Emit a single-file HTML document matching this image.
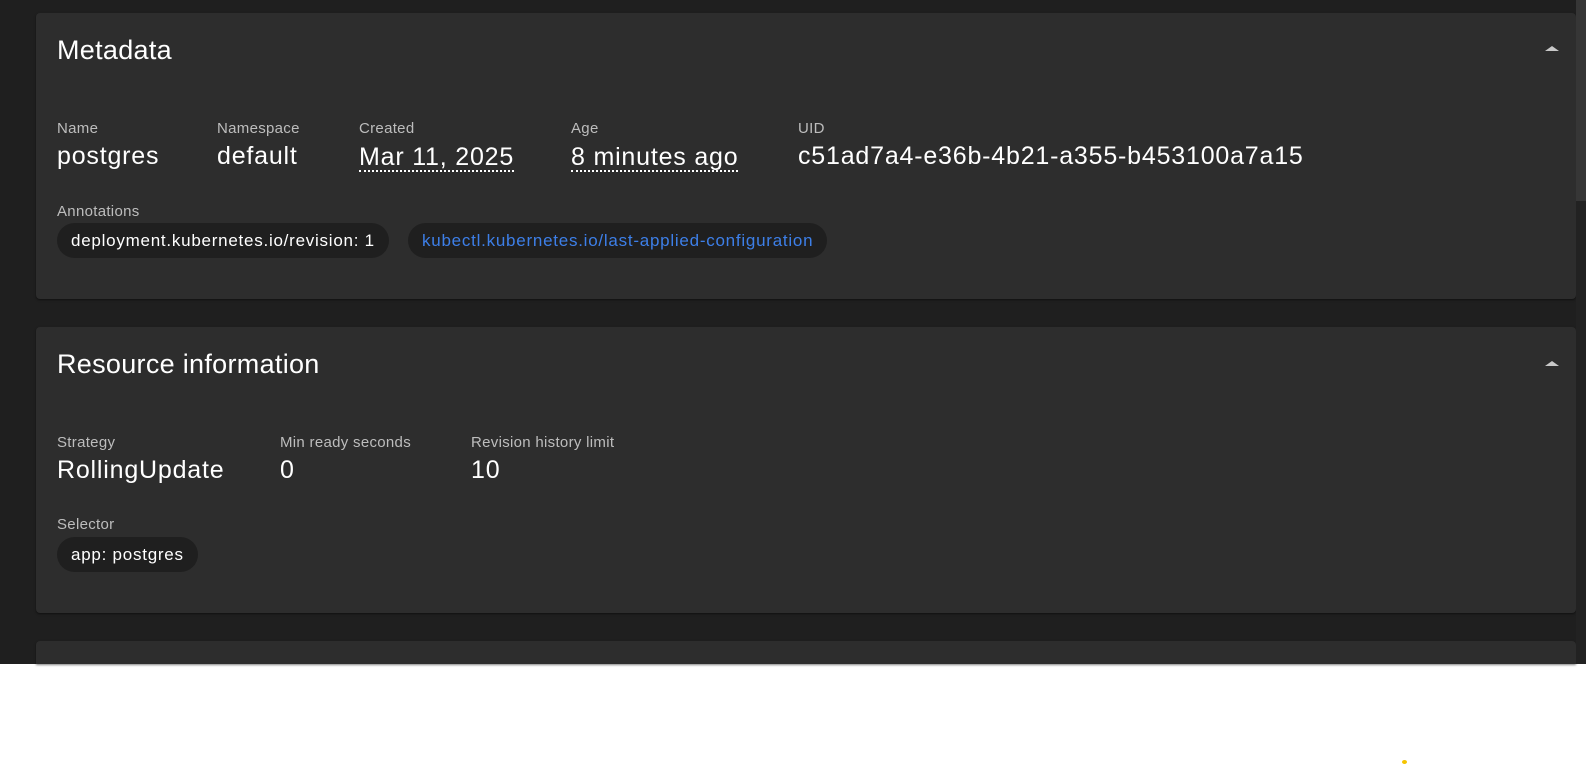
<!DOCTYPE html>
<html><head><meta charset="utf-8"><style>
*{margin:0;padding:0;box-sizing:border-box}
body{width:1586px;height:775px;background:#fff;position:relative;overflow:hidden;font-family:"Liberation Sans",Arial,sans-serif;color:#fff}
.bg{position:absolute;left:0;top:0;width:1586px;height:664px;background:#1f1f1f}
.card{position:absolute;left:36px;width:1540px;background:#2d2d2d;border-radius:4px;box-shadow:0 1px 2px rgba(0,0,0,.5)}
.t{position:absolute;font-size:27px;color:#fff;white-space:nowrap;letter-spacing:0.3px}
.l{position:absolute;font-size:15px;color:#bdbdbd;white-space:nowrap;letter-spacing:0.3px}
.v{position:absolute;font-size:25px;color:#fff;white-space:nowrap;letter-spacing:0.8px}
.u{border-bottom:2px dotted #fff;line-height:25px}
.chip{position:absolute;height:35px;border-radius:18px;background:#1f1f1f;font-size:17px;line-height:35px;padding:0 14px;white-space:nowrap;color:#fff;letter-spacing:0.75px}
.chev{position:absolute;width:0;height:0;border-left:7px solid transparent;border-right:7px solid transparent;border-bottom:5px solid #c8c8c8}
.sb{position:absolute;left:1576px;top:0;width:10px;height:664px;background:#222}
.th{position:absolute;left:1576px;top:0;width:10px;height:201px;background:#363636}
</style></head><body>
<div class="bg"></div>
<div class="card" style="top:13px;height:286px"></div>
<div class="card" style="top:327px;height:286px"></div>
<div class="card" style="top:641px;height:23px;border-radius:4px 4px 0 0"></div>
<div class="sb"></div><div class="th"></div>

<div class="t" style="left:57px;top:35px">Metadata</div>
<div class="chev" style="left:1545px;top:46px"></div>
<div class="l" style="left:57px;top:120px">Name</div>
<div class="v" style="left:57px;top:142px">postgres</div>
<div class="l" style="left:217px;top:120px">Namespace</div>
<div class="v" style="left:217px;top:142px">default</div>
<div class="l" style="left:359px;top:120px">Created</div>
<div class="v u" style="left:359px;top:145px">Mar 11, 2025</div>
<div class="l" style="left:571px;top:120px">Age</div>
<div class="v u" style="left:571px;top:145px">8 minutes ago</div>
<div class="l" style="left:798px;top:120px">UID</div>
<div class="v" style="left:798px;top:142px">c51ad7a4-e36b-4b21-a355-b453100a7a15</div>
<div class="l" style="left:57px;top:203px">Annotations</div>
<div class="chip" style="left:57px;top:223px">deployment.kubernetes.io/revision: 1</div>
<div class="chip" style="left:408px;top:223px;color:#3d7fe8">kubectl.kubernetes.io/last-applied-configuration</div>

<div class="t" style="left:57px;top:349px">Resource information</div>
<div class="chev" style="left:1545px;top:361px"></div>
<div class="l" style="left:57px;top:434px">Strategy</div>
<div class="v" style="left:57px;top:456px">RollingUpdate</div>
<div class="l" style="left:280px;top:434px">Min ready seconds</div>
<div class="v" style="left:280px;top:456px">0</div>
<div class="l" style="left:471px;top:434px">Revision history limit</div>
<div class="v" style="left:471px;top:456px">10</div>
<div class="l" style="left:57px;top:516px">Selector</div>
<div class="chip" style="left:57px;top:537px">app: postgres</div>

<div style="position:absolute;left:1402px;top:760px;width:5px;height:4px;border-radius:50%;background:#f5c400"></div>
</body></html>
